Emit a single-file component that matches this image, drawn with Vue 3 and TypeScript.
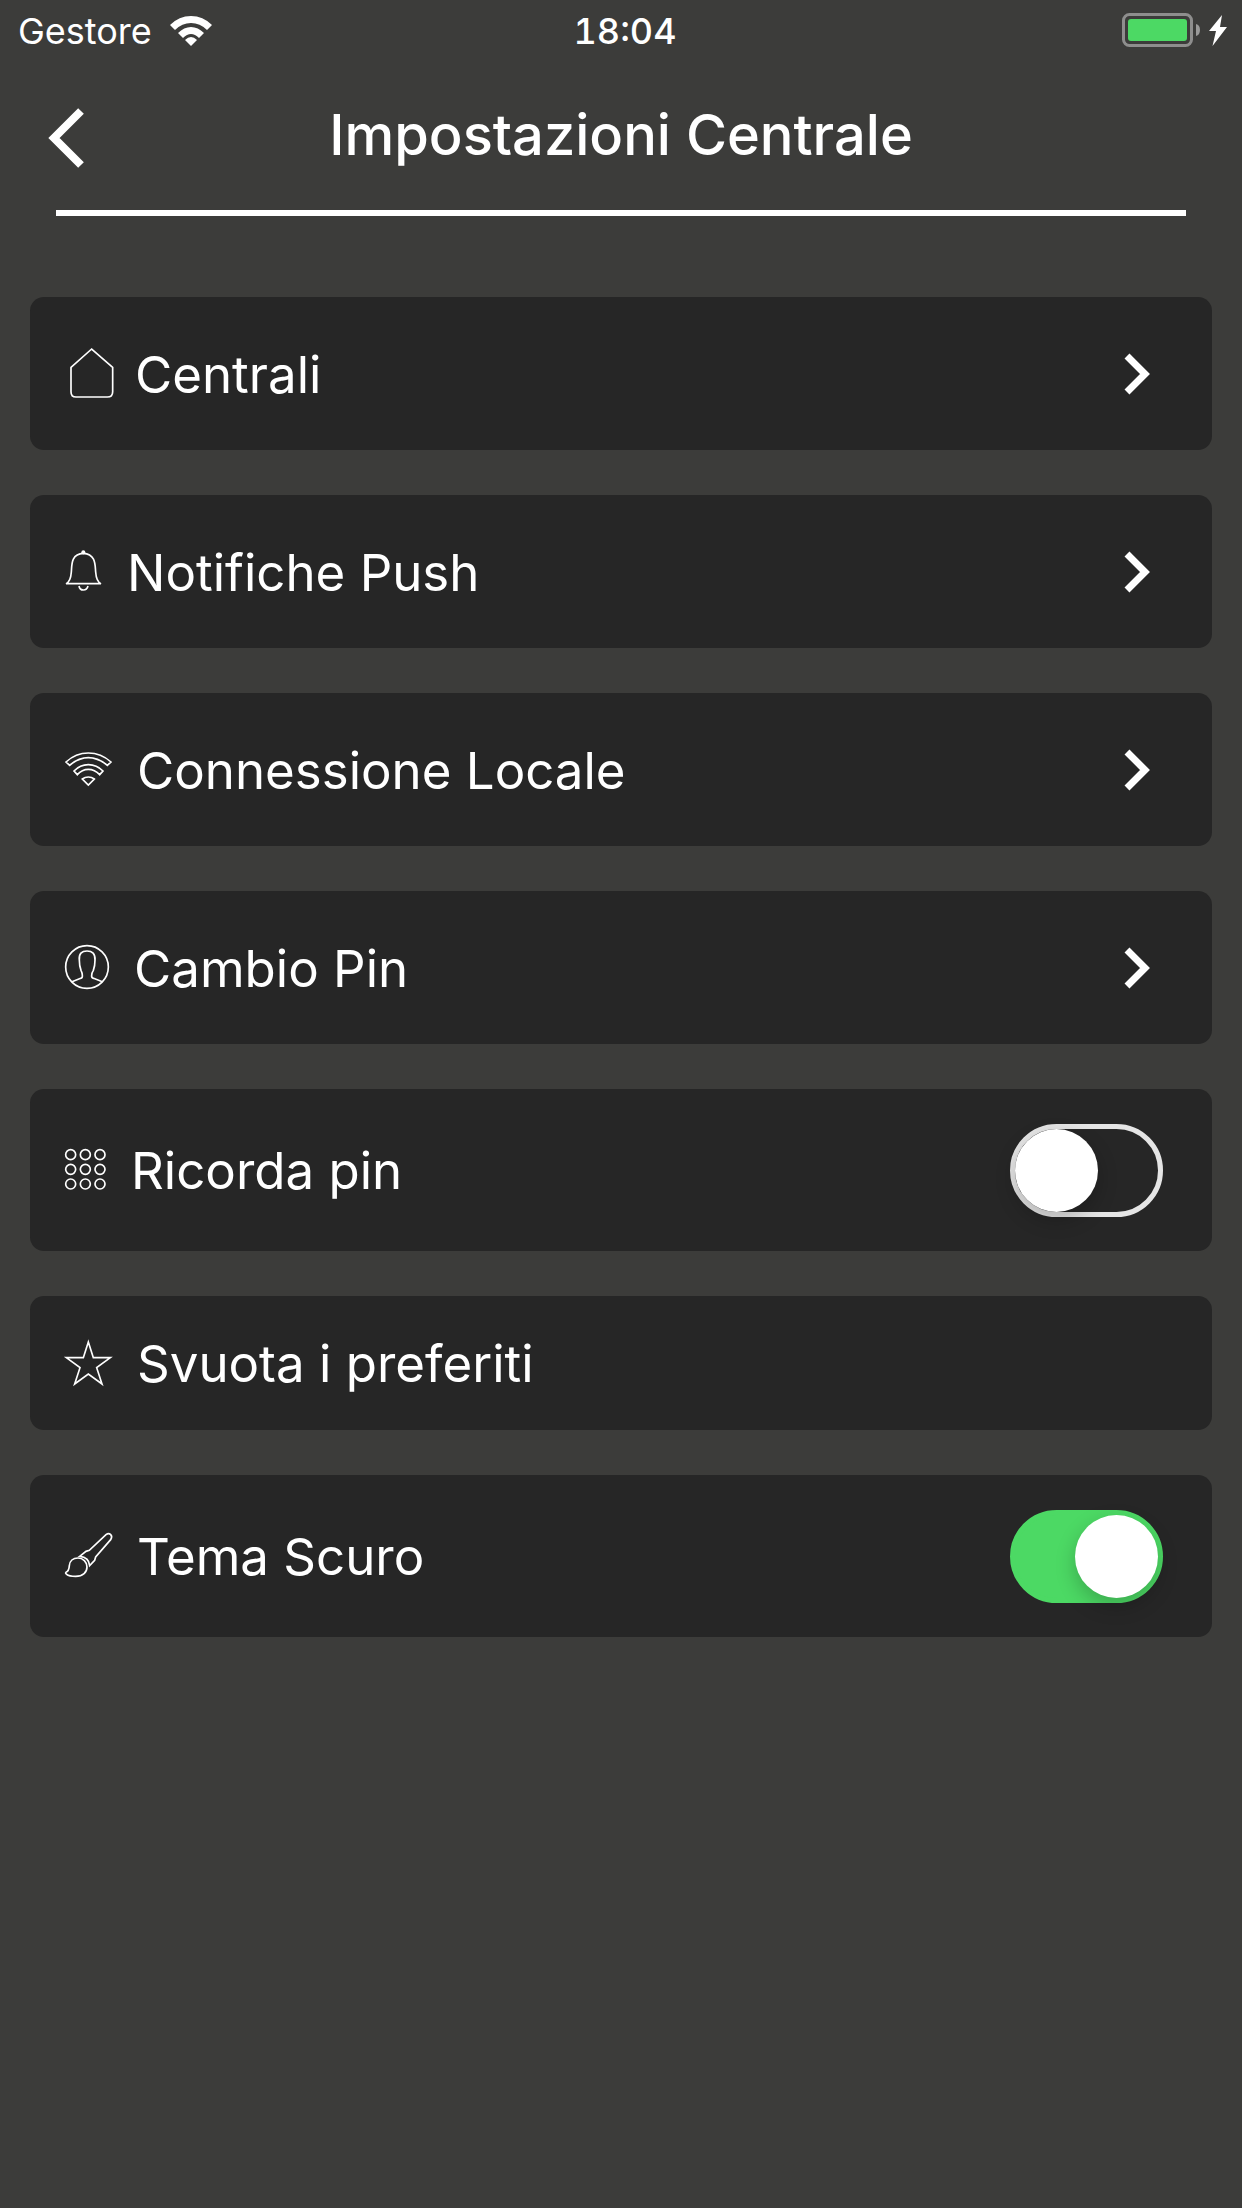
<script setup lang="ts">
import { ref } from 'vue'

type IconName = 'house' | 'bell' | 'wifi' | 'person' | 'keypad' | 'star' | 'brush'

interface Row {
  id: string
  label: string
  icon: IconName
  kind: 'link' | 'switch' | 'action'
}

const rows: Row[] = [
  { id: 'centrali', label: 'Centrali', icon: 'house', kind: 'link' },
  { id: 'notifiche', label: 'Notifiche Push', icon: 'bell', kind: 'link' },
  { id: 'connessione', label: 'Connessione Locale', icon: 'wifi', kind: 'link' },
  { id: 'pin', label: 'Cambio Pin', icon: 'person', kind: 'link' },
  { id: 'ricorda', label: 'Ricorda pin', icon: 'keypad', kind: 'switch' },
  { id: 'svuota', label: 'Svuota i preferiti', icon: 'star', kind: 'action' },
  { id: 'tema', label: 'Tema Scuro', icon: 'brush', kind: 'switch' },
]

const switches = ref<Record<string, boolean>>({ ricorda: false, tema: true })

const keypadDots = [17, 61, 105]
</script>

<template>
  <div class="screen">
    <div class="status">
      <div class="carrier">
        <span>Gestore</span>
        <svg class="signal" viewBox="0 0 42 30" aria-hidden="true">
          <path d="M0 9 Q9 0 21 0 T42 9 L37 14 Q30 7 21 7 T5 14Z" />
          <path d="M8 17 Q14 11 21 11 T34 17 L29 22 Q25 18 21 18 T13 22Z" />
          <path d="M15 24 Q18 21 21 21 T27 24 L21 30Z" />
        </svg>
      </div>
      <time class="clock">18:04</time>
      <div class="power">
        <svg class="battery" viewBox="0 0 105 34" aria-hidden="true">
          <rect x="1.5" y="1.5" width="68" height="31" rx="6" fill="none" stroke="#8e8e8d" stroke-width="3" />
          <rect x="6" y="6" width="59" height="22" rx="3" fill="#4cd964" />
          <path d="M74 11Q78 12 78 17T74 23Z" fill="#9a9a99" />
          <path d="M100 2L87 18H94L90.500 33L105 14H98Z" fill="#fff" />
        </svg>
      </div>
    </div>

    <header class="header">
      <button class="back" type="button" aria-label="Indietro">
        <svg viewBox="0 0 36 60" aria-hidden="true">
          <path d="M33 3L6 30L33 57" fill="none" stroke="#fff" stroke-width="8" />
        </svg>
      </button>
      <h1>Impostazioni Centrale</h1>
    </header>
    <hr class="rule" />

    <main class="list">
      <component
        :is="row.kind === 'switch' ? 'label' : 'button'"
        v-for="row in rows"
        :key="row.id"
        :class="['card', row.kind]"
        :type="row.kind === 'switch' ? undefined : 'button'"
      >
        <svg v-if="row.icon === 'house'" class="icon house" viewBox="0 0 135 150" aria-hidden="true">
          <path d="M80 3L18 58V131Q18 147 33 147H127Q143 147 143 131V58Z" />
        </svg>
        <svg v-else-if="row.icon === 'bell'" class="icon bell" viewBox="0 0 111 123" aria-hidden="true">
          <circle cx="55" cy="7" r="6" fill="#fff" stroke="none" />
          <path d="M3 101H108Q94 95 92 66C90 48 94 12 55 10C16 12 21 48 19 66Q17 95 3 101Z" />
          <path d="M42 108Q44 120 55 120T69 108" />
        </svg>
        <svg v-else-if="row.icon === 'wifi'" class="icon wifi" viewBox="0 0 141 102" aria-hidden="true">
          <path d="M3 30Q32 3 70 3T138 30L127 40Q99 17 70 17T14 40Z" />
          <path d="M27 57Q45 38 70 38T114 57L104 68Q89 52 70 52T37 68Z" />
          <path d="M52 81Q60 75 70 75T88 81L70 99Z" />
        </svg>
        <svg v-else-if="row.icon === 'person'" class="icon person" viewBox="0 0 132 132" aria-hidden="true">
          <circle cx="66" cy="66" r="64" />
          <path d="M21 110L47 100Q53 99 52 91Q52 84 48 76Q43 63 43 45C41 26 50 18 66 18S91 26 90 45Q90 63 85 76Q80 84 80 91Q79 99 86 100L112 110" />
        </svg>
        <svg v-else-if="row.icon === 'keypad'" class="icon keypad" viewBox="0 0 123 123" aria-hidden="true">
          <template v-for="cy in keypadDots" :key="cy">
            <circle v-for="cx in keypadDots" :key="cx" :cx="cx" :cy="cy" r="15" />
          </template>
        </svg>
        <svg v-else-if="row.icon === 'star'" class="icon star" viewBox="0 0 141 135" aria-hidden="true">
          <path d="M70 6L85 53H136L95 83L111 132L70 102L29 132L45 83L4 53H55Z" />
        </svg>
        <svg v-else class="icon brush" viewBox="0 0 141 132" aria-hidden="true">
          <path d="M44 70L63 55L73 52L123 5Q131 -1 137 5Q143 11 137 20L92 72L89 82L74 98Q72 72 44 70Z" />
          <path d="M3 118Q12 114 13 98C14 84 24 75 39 75S66 87 66 102S54 130 32 130Q12 130 5 124Q0 121 3 118Z" />
        </svg>

        <span class="text">{{ row.label }}</span>

        <svg v-if="row.kind === 'link'" class="chevron" viewBox="0 0 26 42" aria-hidden="true">
          <path d="M3 3L21 21L3 39" fill="none" stroke="#fff" stroke-width="7" />
        </svg>
        <input
          v-if="row.kind === 'switch'"
          v-model="switches[row.id]"
          class="toggle"
          type="checkbox"
          role="switch"
        />
      </component>
    </main>
  </div>
</template>

<style>
body {
  margin: 0;
  background: #3c3c3a;
}
</style>

<style scoped>
.screen {
  min-height: 100vh;
  background: #3c3c3a;
  color: #fff;
  font-family: Inter, "Liberation Sans", sans-serif;
}

.status {
  display: grid;
  grid-template-columns: 1fr auto 1fr;
  align-items: center;
  height: 62px;
  padding: 0 10px 0 18px;
  box-sizing: border-box;
  font-size: 36px;
  line-height: 62px;
}

.carrier {
  display: flex;
  align-items: center;
  gap: 18px;
}

.signal {
  width: 42px;
  height: 30px;
  fill: #fff;
}

.clock {
  font-weight: 500;
  font-variant-numeric: tabular-nums;
}

.power {
  display: flex;
  justify-content: flex-end;
  padding: 0 5px 2px 0;
}

.battery {
  width: 105px;
  height: 34px;
}

.header {
  display: grid;
  grid-template-columns: 96px 1fr 96px;
  align-items: center;
  height: 148px;
}

.header h1 {
  margin: 0;
  padding-bottom: 2px;
  font-size: 56px;
  font-weight: 500;
  line-height: 72px;
  text-align: center;
  white-space: nowrap;
}

.back {
  display: flex;
  margin: 4px 0 0;
  padding: 0 0 0 48px;
  border: 0;
  background: none;
}

.back svg {
  width: 36px;
  height: 60px;
}

.rule {
  height: 6px;
  margin: 0 56px;
  border: 0;
  background: #fff;
}

.list {
  display: flex;
  flex-direction: column;
  gap: 45px;
  padding: 81px 30px;
}

.card {
  display: flex;
  align-items: center;
  gap: 25px;
  min-height: 134px;
  padding: 0 49px 0 35px;
  border: 0;
  border-radius: 14px;
  box-sizing: border-box;
  background: #262626;
  color: inherit;
  font-family: inherit;
  font-size: 51px;
  line-height: 64px;
  text-align: left;
}

.card.link {
  min-height: 153px;
  padding-right: 62px;
}

.card.switch {
  min-height: 162px;
}

.text {
  flex: 1;
  padding-top: 2px;
}

.icon {
  flex: none;
  margin-bottom: 2px;
  overflow: visible;
  fill: none;
  stroke: #fff;
  stroke-width: 5;
}

.house {
  width: 45px;
  height: 50px;
}

.bell {
  width: 37px;
  height: 41px;
}

.wifi {
  width: 47px;
  height: 34px;
}

.person {
  width: 44px;
  height: 44px;
}

.keypad {
  width: 41px;
  height: 41px;
}

.star {
  width: 47px;
  height: 45px;
}

.brush {
  width: 47px;
  height: 44px;
}

.chevron {
  flex: none;
  width: 26px;
  height: 42px;
}

.toggle {
  flex: none;
  width: 153px;
  height: 93px;
  margin: 0;
  border: 5px solid #e5e5e5;
  border-radius: 47px;
  box-sizing: border-box;
  appearance: none;
}

.toggle::before {
  content: "";
  display: block;
  width: 83px;
  height: 83px;
  border-radius: 50%;
  background: #fff;
  box-shadow: 0 8px 20px rgba(0, 0, 0, 0.22);
}

.toggle:checked {
  border-color: #4cd964;
  background: #4cd964;
}

.toggle:checked::before {
  margin-left: auto;
}
</style>
